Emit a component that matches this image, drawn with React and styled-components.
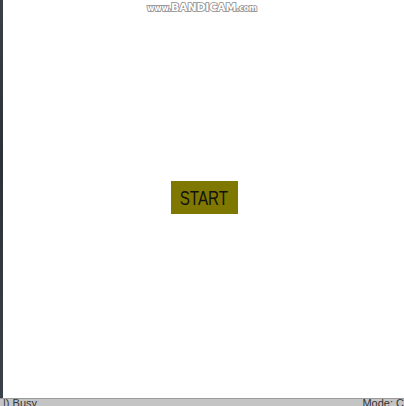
import React from "react";
import styled, { createGlobalStyle } from "styled-components";

const GlobalStyle = createGlobalStyle`
  html, body {
    margin: 0;
    padding: 0;
    width: 404px;
    height: 406px;
    overflow: hidden;
    background: #ffffff;
    font-family: "Liberation Sans", Arial, sans-serif;
  }
`;

const Frame = styled.div`
  width: 404px;
  height: 406px;
  display: flex;
  flex-direction: column;
  position: relative;
`;

const Body = styled.div`
  flex: 1;
  display: flex;
`;

const SideStrip = styled.div`
  width: 3px;
  background: linear-gradient(#3a3f48, #2c3038 40%, #3b404a);
`;

const Canvas = styled.div`
  flex: 1;
  display: flex;
  align-items: center;
  justify-content: center;
  padding-bottom: 4px;
`;

const StartButton = styled.button`
  width: 67px;
  height: 33px;
  margin-left: 1px;
  border: none;
  background: #7e7800;
  color: #111;
  font-family: "Liberation Sans", Arial, sans-serif;
  font-size: 20px;
  padding: 0;
  display: flex;
  align-items: center;
  justify-content: center;
  cursor: pointer;
`;

const Label = styled.span`
  display: inline-block;
  transform: scale(0.76, 1);
  font-size: 20px;
  margin-top: 3px;
`;

const StatusBar = styled.div`
  height: 7px;
  background: #c4c4c4;
  border-top: 1px solid #9a9a9a;
  display: flex;
  justify-content: space-between;
  overflow: hidden;
  font-size: 11px;
  line-height: 9px;
  color: #333;
`;

const StatusText = styled.span`
  padding: 0 ${p => p.$pad || 0}px;
  white-space: nowrap;
`;

const Watermark = styled.div`
  position: absolute;
  top: 1px;
  left: 0;
  right: 0;
  text-align: center;
  font-family: "DejaVu Sans", sans-serif;
  font-weight: bold;
  font-size: 11px;
  color: #ffffff;
  -webkit-text-stroke: 1.6px #8a8a8a;
  paint-order: stroke fill;
  letter-spacing: -0.2px;
`;

const Small = styled.span`
  font-size: 8px;
`;

export default function App() {
  return (
    <Frame>
      <GlobalStyle />
      <Body>
        <SideStrip />
        <Canvas>
          <StartButton>
            <Label>START</Label>
          </StartButton>
        </Canvas>
      </Body>
      <StatusBar>
        <StatusText $pad={3}>|)  Busy</StatusText>
        <StatusText>Mode: C</StatusText>
      </StatusBar>
      <Watermark>
        <Small>www.</Small>BANDICAM<Small>.com</Small>
      </Watermark>
    </Frame>
  );
}
